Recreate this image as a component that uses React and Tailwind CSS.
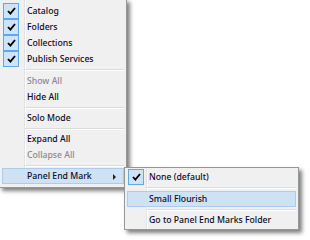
import React from 'react';

const Check = () => (
  <svg width="9" height="8" viewBox="0 0 9 8" className="block">
    <path d="M1 4 L3.4 6.6 L8 1" fill="none" stroke="#000" strokeWidth="1.8" />
  </svg>
);

function Row({ label, checked, disabled, active, arrow, sub }) {
  return (
    <div
      className={`relative flex items-center h-4 mx-[2px] border ${
        active ? 'bg-[#cfe2f5] border-[#a9cdf0]' : 'border-transparent'
      }`}
    >
      <div className={`${sub ? 'w-[18px]' : 'w-[21px]'} h-full flex items-center shrink-0`}>
        {checked && (
          <div className="w-[16px] h-[16px] -my-px flex items-center justify-center bg-[#cde3f7] border border-[#5fa9e8]">
            <Check />
          </div>
        )}
      </div>
      <span
        className={`pl-[3px] text-[8.7px] font-medium leading-none whitespace-nowrap ${
          disabled ? 'text-[#8a8a8a]' : 'text-[#0c0c1c]'
        }`}
      >
        {label}
      </span>
      {arrow && (
        <span className="absolute right-[7px] top-[5px] w-0 h-0 border-y-[3px] border-y-transparent border-l-[3px] border-l-[#222]" />
      )}
    </div>
  );
}

const Sep = ({ sub, tall }) => (
  <div
    className={`${tall ? 'h-[6px]' : 'h-[5px]'} flex flex-col justify-center ${
      sub ? 'ml-[21px]' : 'ml-[25px]'
    } mr-[2px]`}
  >
    <div className="h-px bg-[#dcdcdc]" />
    <div className="h-px bg-white" />
  </div>
);

export default function App() {
  return (
    <div
      className="w-[310px] h-[240px] bg-white relative overflow-hidden"
      style={{ fontFamily: '"Noto Sans", "Open Sans", sans-serif' }}
    >
      <div className="relative -ml-px -mt-px w-[128px] bg-[#f0f0f0] border border-[#979797] py-[3px] shadow-[3px_3px_4px_rgba(0,0,0,0.5)]">
        <div className="absolute left-[24px] top-0 bottom-0 w-px bg-[#e2e3e3]" />
        <div className="absolute left-[25px] top-0 bottom-0 w-px bg-white" />
        <div className="relative">
          <Row label="Catalog" checked />
          <Row label="Folders" checked />
          <Row label="Collections" checked />
          <Row label="Publish Services" checked />
          <Sep tall />
          <Row label="Show All" disabled />
          <Row label="Hide All" />
          <Sep />
          <Row label="Solo Mode" />
          <Sep />
          <Row label="Expand All" />
          <Row label="Collapse All" disabled />
          <Sep />
          <Row label="Panel End Mark" active arrow />
        </div>

        <div className="absolute left-[124px] top-[167px] w-[175px] bg-[#f0f0f0] border border-[#979797] py-px shadow-[3px_3px_4px_rgba(0,0,0,0.5)]">
          <div className="absolute left-[21px] top-0 bottom-0 w-px bg-[#e2e3e3]" />
          <div className="absolute left-[22px] top-0 bottom-0 w-px bg-white" />
          <div className="relative">
            <Row label="None (default)" checked sub />
            <Sep sub tall />
            <Row label="Small Flourish" active sub />
            <Sep sub />
            <Row label="Go to Panel End Marks Folder" sub />
          </div>
        </div>
      </div>
    </div>
  );
}
